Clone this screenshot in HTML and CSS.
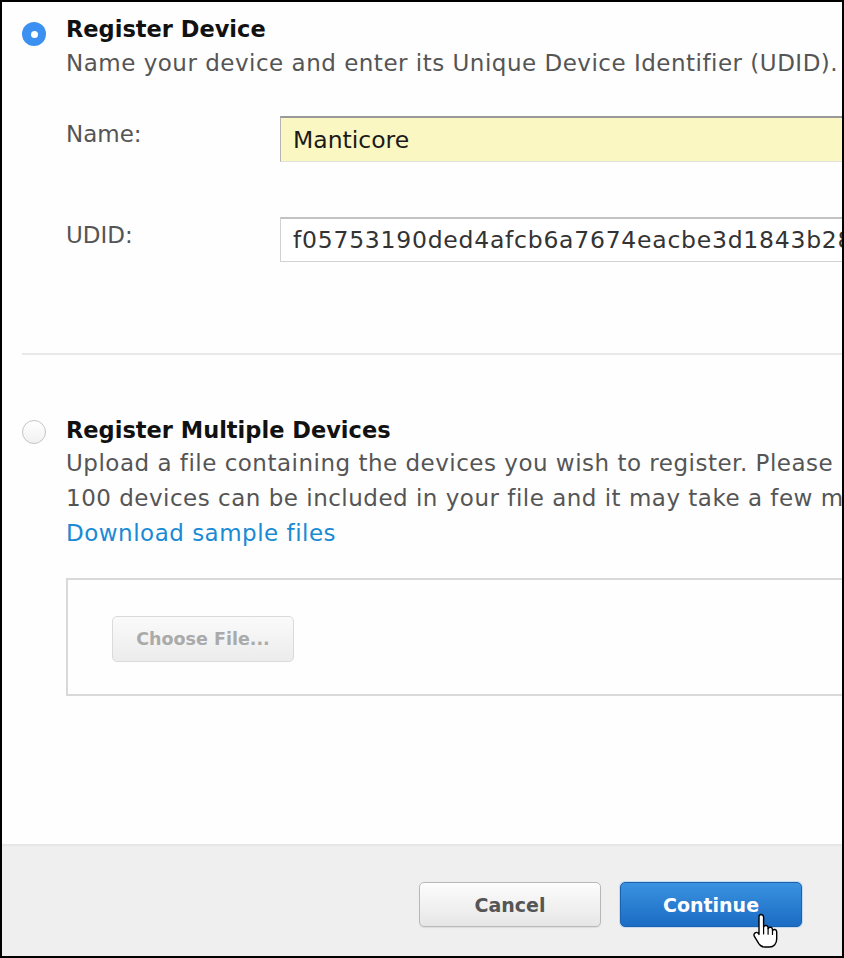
FILE: index.html
```html
<!DOCTYPE html>
<html>
<head>
<meta charset="utf-8">
<link rel="stylesheet" href="styles.css">
</head>
<body>
<div class="frame">
  <div class="main">
    <section class="option first">
      <span class="radio radio-on"><span class="dot"></span></span>
      <div class="option-body">
        <div class="title">Register Device</div>
        <div class="desc">Name your device and enter its Unique Device Identifier (UDID).</div>
        <div class="row row-name">
          <label class="label">Name:</label>
          <div class="input input-filled">Manticore</div>
        </div>
        <div class="row row-udid">
          <label class="label">UDID:</label>
          <div class="input">f05753190ded4afcb6a7674eacbe3d1843b28a7c</div>
        </div>
      </div>
    </section>
    <hr class="divider">
    <section class="option second">
      <span class="radio"></span>
      <div class="option-body">
        <div class="title">Register Multiple Devices</div>
        <div class="desc multi">
          <span class="line">Upload a file containing the devices you wish to register. Please note that a maximum of</span>
          <span class="line">100 devices can be included in your file and it may take a few minutes to process.</span>
          <a class="line link" href="#">Download sample files</a>
        </div>
        <div class="upload-box">
          <button class="btn btn-file" disabled>Choose File...</button>
        </div>
      </div>
    </section>
  </div>
  <footer class="footer">
    <button class="btn btn-cancel">Cancel</button>
    <button class="btn btn-continue">Continue</button>
  </footer>
  <svg class="cursor" width="30" height="38" viewBox="0 0 30 38">
    <path d="M9 2.5c1.5 0 2.6 1.1 2.6 2.6V15c.5-1.1 1.5-1.7 2.7-1.5 1.1.2 1.8 1.1 1.8 2.2v.9c.5-1 1.5-1.5 2.6-1.300 1.1.2 1.8 1.1 1.8 2.2v1.1c.5-.9 1.4-1.3 2.4-1.1 1.1.3 1.8 1.2 1.8 2.3V27c0 4.6-2.8 8-7.2 8h-5.1c-2.6 0-4.2-1.3-5.6-3.4L2.4 24.4c-.8-1.3-.4-2.9.8-3.6 1.2-.7 2.6-.3 3.4.9l.4.7V5.1C7 3.6 7.6 2.5 9 2.5z" fill="#fff" stroke="#000" stroke-width="1.4" stroke-linejoin="round"/>
    <path d="M11.6 15v7M16.1 16.6v5.6M20.5 18.1v4.3" stroke="#000" stroke-width="1.2" stroke-linecap="round"/>
  </svg>
</div>
</body>
</html>
```
FILE: styles.css
```css
html, body {
  margin: 0;
  padding: 0;
  background: #fff;
}

.frame {
  position: relative;
  box-sizing: border-box;
  width: 844px;
  height: 958px;
  border: 2px solid #000;
  background: #fefefe;
  overflow: hidden;
  display: flex;
  flex-direction: column;
  font-family: "DejaVu Sans", "Liberation Sans", sans-serif;
}

.main {
  flex: 1;
  padding-left: 20px;
}

.option {
  display: flex;
  gap: 20px;
}

.first {
  padding-top: 13px;
}

.second {
  padding-top: 61px;
}

.option-body {
  flex: 1;
  min-width: 0;
}

.radio {
  flex: none;
  box-sizing: border-box;
  width: 24px;
  height: 24px;
  margin-top: 7px;
  border-radius: 50%;
  border: 1px solid #c4c4c4;
  background: linear-gradient(#ffffff, #f1f1f1);
  display: flex;
  align-items: center;
  justify-content: center;
}

.second .radio {
  margin-top: 4px;
}

.radio-on {
  border: none;
  background: #3b90f2;
}

.dot {
  width: 7px;
  height: 7px;
  border-radius: 50%;
  background: #fff;
}

.title {
  font-size: 22.5px;
  font-weight: bold;
  line-height: 28px;
  color: #111;
  white-space: nowrap;
}

.desc {
  margin-top: 3px;
  font-size: 23px;
  letter-spacing: 0.5px;
  line-height: 34px;
  color: #555;
  white-space: nowrap;
}

.multi {
  margin-top: 2px;
  line-height: 35px;
}

.line {
  display: block;
}

.link {
  color: #1a8ad4;
  text-decoration: none;
}

.row {
  display: flex;
  align-items: flex-start;
  width: 900px;
}

.row-name {
  margin-top: 36px;
}

.row-udid {
  margin-top: 55px;
}

.label {
  flex: none;
  width: 214px;
  padding-top: 5px;
  font-size: 23px;
  line-height: 26px;
  color: #555;
}

.input {
  box-sizing: border-box;
  flex: 1;
  height: 46px;
  padding-left: 12px;
  font-size: 23.5px;
  line-height: 44px;
  color: #222;
  background: #fff;
  border: 1px solid #d2d2d2;
  border-top: 2px solid #c2c2c2;
  white-space: nowrap;
  overflow: hidden;
}

.input-filled {
  background: #faf7c2;
  border-color: #c8c8c8 #c8c8c8 #e0e0dc #b4b4b4;
  border-top: 2px solid #999;
  color: #1a1a1a;
}

.row-udid .input {
  height: 45px;
  line-height: 43px;
  font-size: 23.5px;
  letter-spacing: 0.75px;
  color: #333;
}

.divider {
  margin: 91px 0 0 0;
  border: none;
  height: 2px;
  background: #e8e8e8;
}

.upload-box {
  margin-top: 27px;
  box-sizing: border-box;
  width: 900px;
  height: 118px;
  border: 2px solid #d9d9d9;
  background: #fefefe;
  padding: 36px 0 0 44px;
}

.btn {
  box-sizing: border-box;
  font-family: "DejaVu Sans", "Liberation Sans", sans-serif;
  font-weight: bold;
  border-radius: 5px;
  padding: 0;
}

.btn-file {
  width: 182px;
  height: 46px;
  font-size: 17.5px;
  color: #aaaaaa;
  border: 1px solid #dadada;
  background: linear-gradient(#fafafa, #ececec);
}

.footer {
  flex: none;
  height: 112px;
  box-sizing: border-box;
  background: #efefef;
  border-top: 2px solid #e6e6e6;
  padding: 36px 40px 0 0;
  display: flex;
  justify-content: flex-end;
  align-items: flex-start;
  gap: 19px;
}

.btn-cancel,
.btn-continue {
  width: 182px;
  height: 45px;
  font-size: 19px;
}

.btn-cancel {
  color: #555;
  border: 1px solid #b8b8b8;
  background: linear-gradient(#fdfdfd, #e6e6e6);
  box-shadow: 0 1px 1px rgba(0, 0, 0, 0.08);
}

.btn-continue {
  color: #fff;
  border: 1px solid #1a62b0;
  background: linear-gradient(#3a92e0, #1b6cc4);
  box-shadow: 0 0 0 1px rgba(120, 180, 240, 0.35);
}

.cursor {
  position: absolute;
  left: 750px;
  top: 910px;
}
```
